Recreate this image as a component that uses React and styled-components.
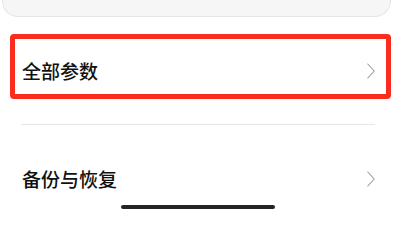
import styled, { createGlobalStyle } from "styled-components";

const GlobalStyle = createGlobalStyle`
  html, body {
    margin: 0;
    padding: 0;
    background: #fff;
  }
  body {
    font-family: "Noto Sans CJK SC", "Noto Sans", sans-serif;
    -webkit-font-smoothing: antialiased;
  }
`;

const Page = styled.div`
  position: relative;
  width: 403px;
  height: 215px;
  overflow: hidden;
  background: #fff;
`;

const TopCard = styled.div`
  margin: 0 12px 0 2px;
  height: 16px;
  background: #f6f6f6;
  border: 1px solid #e6e6e6;
  border-top: none;
  border-radius: 0 0 16px 16px;
`;

const List = styled.div`
  display: flex;
  flex-direction: column;
`;

const Row = styled.div`
  position: relative;
  display: flex;
  align-items: center;
  justify-content: space-between;
  height: 107px;
  padding: 0 28px 0 22px;
`;

const Label = styled.span`
  font-size: 19px;
  font-weight: 500;
  color: #111;
  line-height: 1;
  letter-spacing: 0;
`;

const Highlight = styled.div`
  position: absolute;
  left: 10px;
  top: 17px;
  width: 381px;
  height: 65px;
  box-sizing: border-box;
  border: 5.5px solid #fb2b1d;
  border-radius: 4px;
  pointer-events: none;
`;

const Divider = styled.div`
  height: 1px;
  margin: 0 28px 0 21px;
  background: #e6e6e6;
`;

const HomeBar = styled.div`
  position: absolute;
  left: 121px;
  top: 205px;
  width: 154px;
  height: 4px;
  border-radius: 3px;
  background: #242424;
`;

const Chevron = () => (
  <svg width="8" height="16" viewBox="0 0 8 16" fill="none">
    <polyline
      points="0.8,1 7.2,8 0.8,15"
      stroke="#9a9a9a"
      strokeWidth="1.1"
      strokeLinecap="round"
      strokeLinejoin="round"
    />
  </svg>
);

const items = [
  { label: "全部参数", highlighted: true },
  { label: "备份与恢复" },
];

const App = () => {
  return (
    <Page>
      <GlobalStyle />
      <TopCard />
      <List>
        {items.map((item, i) => (
          <div key={item.label}>
            {i > 0 && <Divider />}
            <Row>
              <Label>{item.label}</Label>
              <Chevron />
              {item.highlighted && <Highlight />}
            </Row>
          </div>
        ))}
      </List>
      <HomeBar />
    </Page>
  );
};

export default App;
